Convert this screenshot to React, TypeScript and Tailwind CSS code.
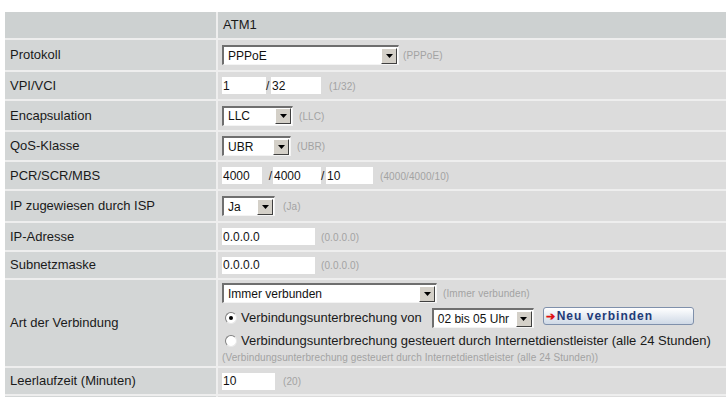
import React from 'react';

const Hint: React.FC<{ children: React.ReactNode }> = ({ children }) => (
  <span className="text-[10px] tracking-[0.1px] text-[#a3a3a3]">{children}</span>
);

const Select: React.FC<{ value: string; width: string }> = ({ value, width }) => (
  <div
    className={`${width} h-[20px] flex items-center bg-white border-t-2 border-l-2 border-t-[#6f6f6f] border-l-[#6f6f6f] border-b border-r border-b-[#f4f4f4] border-r-[#f4f4f4]`}
  >
    <span className="flex-1 pl-[4px] text-[12px] text-[#111] leading-none">{value}</span>
    <span className="w-[16px] h-[16px] mr-[1px] flex items-center justify-center bg-[#d4d0c8] border border-t-white border-l-white border-b-[#404040] border-r-[#404040]">
      <svg width="7" height="4" viewBox="0 0 7 4">
        <path d="M0 0h7L3.5 4z" fill="#000" />
      </svg>
    </span>
  </div>
);

const Input: React.FC<{ value: string; width: string }> = ({ value, width }) => (
  <div className={`${width} h-[17px] bg-white flex items-center pl-[1px] text-[12px] text-[#111] leading-none`}>
    {value}
  </div>
);

const Radio: React.FC<{ checked?: boolean }> = ({ checked }) => (
  <span className="w-[12px] h-[12px] rounded-full bg-white border border-t-[#808080] border-l-[#808080] border-b-[#e8e8e8] border-r-[#e8e8e8] flex items-center justify-center shrink-0">
    {checked && <span className="w-[4px] h-[4px] rounded-full bg-black" />}
  </span>
);

const Row: React.FC<{ label: string; h: string; children?: React.ReactNode; header?: boolean }> = ({
  label,
  h,
  children,
  header,
}) => (
  <>
    <div className={`${h} flex items-center pl-[5px] ${header ? 'bg-[#cdd1d1]' : 'bg-[#d3d6d6]'}`}>{label}</div>
    <div className={`${h} flex items-center pl-[4px] ${header ? 'bg-[#cdd1d1]' : 'bg-[#dcdcdc]'}`}>{children}</div>
  </>
);

export default function App() {
  return (
    <div className="w-[726px] h-[397px] overflow-hidden bg-white pt-[12px] pl-[5px] font-['Liberation_Sans',Arial,sans-serif] text-[13px] text-[#1a1a1a]">
      <div className="grid grid-cols-[211px_1fr] gap-[2px] bg-[#eeeeee]">
        <Row label="" h="h-[26px]" header>
          <span className="pl-[1px]">ATM1</span>
        </Row>
        <Row label="Protokoll" h="h-[30px]">
          <Select value="PPPoE" width="w-[177px]" />
          <span className="ml-[4px]">
            <Hint>(PPPoE)</Hint>
          </span>
        </Row>
        <Row label="VPI/VCI" h="h-[27px]">
          <Input value="1" width="w-[44px]" />
          <span className="w-[5px] text-[12px]">/</span>
          <Input value="32" width="w-[50px]" />
          <span className="ml-[8px]">
            <Hint>(1/32)</Hint>
          </span>
        </Row>
        <Row label="Encapsulation" h="h-[29px]">
          <Select value="LLC" width="w-[71px]" />
          <span className="ml-[6px]">
            <Hint>(LLC)</Hint>
          </span>
        </Row>
        <Row label="QoS-Klasse" h="h-[28px]">
          <Select value="UBR" width="w-[69px]" />
          <span className="ml-[6px]">
            <Hint>(UBR)</Hint>
          </span>
        </Row>
        <Row label="PCR/SCR/MBS" h="h-[27px]">
          <Input value="4000" width="w-[40px]" />
          <span className="w-[11px] text-right pr-[1px] text-[12px]">/</span>
          <Input value="4000" width="w-[48px]" />
          <span className="w-[5px] text-[12px]">/</span>
          <Input value="10" width="w-[47px]" />
          <span className="ml-[7px]">
            <Hint>(4000/4000/10)</Hint>
          </span>
        </Row>
        <Row label="IP zugewiesen durch ISP" h="h-[30px]">
          <Select value="Ja" width="w-[53px]" />
          <span className="ml-[8px]">
            <Hint>(Ja)</Hint>
          </span>
        </Row>
        <Row label="IP-Adresse" h="h-[27px]">
          <Input value="0.0.0.0" width="w-[93px]" />
          <span className="ml-[6px]">
            <Hint>(0.0.0.0)</Hint>
          </span>
        </Row>
        <Row label="Subnetzmaske" h="h-[26px]">
          <Input value="0.0.0.0" width="w-[93px]" />
          <span className="ml-[6px]">
            <Hint>(0.0.0.0)</Hint>
          </span>
        </Row>
        <div className="h-[86px] flex items-center pl-[5px] bg-[#d3d6d6]">Art der Verbindung</div>
        <div className="h-[86px] bg-[#dcdcdc] pl-[4px] pt-[3px] flex flex-col">
          <div className="flex items-center">
            <Select value="Immer verbunden" width="w-[215px]" />
            <span className="ml-[6px]">
              <Hint>(Immer verbunden)</Hint>
            </span>
          </div>
          <div className="flex items-center mt-[4px] pl-[3px]">
            <Radio checked />
            <span className="ml-[4px] text-[13px]">Verbindungsunterbrechung von</span>
            <span className="ml-[10px]">
              <Select value="02 bis 05 Uhr" width="w-[102px]" />
            </span>
            <button className="ml-[9px] w-[151px] h-[18px] mb-[4px] flex items-center rounded-[3px] border border-[#7f90ab] bg-gradient-to-b from-white to-[#cfd9e6] pl-[2px] text-[12px] font-bold text-[#1e3a78] tracking-[1px]">
              <span className="text-[#e01010] text-[11px] mr-[2px] tracking-normal">➔</span>
              Neu verbinden
            </button>
          </div>
          <div className="flex items-center mt-[2px] pl-[3px]">
            <Radio />
            <span className="ml-[4px] text-[13px]">
              Verbindungsunterbrechung gesteuert durch Internetdienstleister (alle 24 Stunden)
            </span>
          </div>
          <div className="leading-none -mt-[1px]">
            <Hint>(Verbindungsunterbrechung gesteuert durch Internetdienstleister (alle 24 Stunden))</Hint>
          </div>
        </div>
        <Row label="Leerlaufzeit (Minuten)" h="h-[26px]">
          <Input value="10" width="w-[53px]" />
          <span className="ml-[8px]">
            <Hint>(20)</Hint>
          </span>
        </Row>
        <Row label="" h="h-[26px]" />
      </div>
    </div>
  );
}
